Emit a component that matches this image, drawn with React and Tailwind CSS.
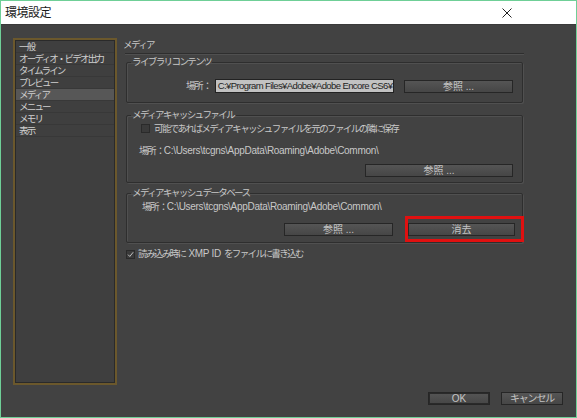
const FONT = "font-['Liberation_Sans','Noto_Sans_CJK_JP',sans-serif]";
const JP = "text-[9.5px] leading-[14px] tracking-[-1.6px]";
const LAT = "text-[10px] leading-[14px] tracking-[-0.3px]";

const NAV = ["一般", "オーディオ・ビデオ出力", "タイムライン", "プレビュー", "メディア", "メニュー", "メモリ", "表示"];

function Btn({ children, className = "" }) {
  return (
    <button
      className={`relative h-[13px] whitespace-nowrap border border-[#262626] bg-gradient-to-b from-[#555] to-[#464646] text-[10px] leading-[11px] text-[#c4c4c4] ${className}`}
    >
      {children}
    </button>
  );
}

function Group({ title, className = "", children }) {
  return (
    <fieldset
      className={`ml-[4px] mr-[1px] rounded-[2px] border border-[#2e2e2e] shadow-[inset_1px_1px_0_#505050,1px_1px_0_#505050] ${className}`}
    >
      <legend className={`ml-[4px] px-[1px] text-[#c8c8c8] ${JP}`}>{title}</legend>
      {children}
    </fieldset>
  );
}

function Check({ checked }) {
  return (
    <span className="flex h-[9px] w-[9px] shrink-0 items-center justify-center border border-[#2a2a2a] bg-[#3a3a3a]">
      {checked && (
        <svg viewBox="0 0 10 10" className="h-[9px] w-[9px]">
          <path d="M1.5 5.2 L4 7.8 L8.8 1.8" fill="none" stroke="#cfcfcf" strokeWidth="1.3" />
        </svg>
      )}
    </span>
  );
}

function PathText({ className = "" }) {
  return (
    <div className={`flex h-[14px] items-center whitespace-nowrap text-[#c8c8c8] ${className}`}>
      <span className={JP}>場所 ：</span>
      <span className={LAT}>C:\Users\tcgns\AppData\Roaming\Adobe\Common\</span>
    </div>
  );
}

export default function App() {
  return (
    <div className={`flex h-[418px] w-[577px] flex-col border border-[#6fcf97] bg-[#424242] ${FONT}`}>
      {/* Title bar */}
      <div className="flex h-[24px] items-center justify-between border-b border-[#3a3a3a] bg-white pl-[4px] pr-[64px]">
        <span className="text-[12px] tracking-[-0.5px] text-[#1a1a1a]">環境設定</span>
        <svg viewBox="0 0 10 10" className="h-[10px] w-[10px]">
          <path d="M0.5 0.5 L9.5 9.5 M9.5 0.5 L0.5 9.5" stroke="#222" strokeWidth="1" />
        </svg>
      </div>

      <div className="flex flex-1 flex-col px-[12px] pt-[13px]">
        <div className="flex h-[347px]">
          {/* Sidebar */}
          <div className="h-full w-[104px] border-2 border-[#6b582c] bg-[#3f3f3f] px-[1px] pt-[1px] shadow-[inset_0_0_0_1px_#2a2a2a]">
            {NAV.map((n) => (
              <div
                key={n}
                className={`h-[12px] whitespace-nowrap border-b border-[#383838] pl-[3px] text-[9.5px] leading-[12px] tracking-[-1.8px] text-[#cfcfcf] ${
                  n === "メディア" ? "bg-[#575757]" : ""
                }`}
              >
                {n}
              </div>
            ))}
          </div>

          {/* Right panel */}
          <div className="ml-[5px] flex w-[402px] flex-col">
            <div className={`pl-[1px] text-[#c8c8c8] ${JP}`}>メディア</div>
            <div className="ml-[3px] mt-[1px] h-px bg-[#2e2e2e] shadow-[0_1px_0_#505050]" />

            <Group title="ライブラリコンテンツ" className="mt-[1px] pb-[9px] pt-[10px]">
              <div className="flex items-center pr-[9px]">
                <span className={`ml-[59px] whitespace-nowrap text-[#c8c8c8] ${JP}`}>場所 ：</span>
                <div className="ml-[4px] h-[14px] w-[179px] overflow-hidden whitespace-nowrap border border-[#222] bg-[#c2c2c2] pl-[2px] text-[9.5px] leading-[12px] tracking-[-0.6px] text-[#1e1e1e]">
                  C:¥Program Files¥Adobe¥Adobe Encore CS6¥
                </div>
                <Btn className="ml-auto w-[109px]">参照 ...</Btn>
              </div>
            </Group>

            <Group title="メディアキャッシュファイル" className="mt-[5px] pb-[5px]">
              <div className="flex h-[13px] items-center pl-[14px]">
                <Check />
                <span className={`ml-[4px] whitespace-nowrap text-[#c8c8c8] ${JP}`}>
                  可能であればメディアキャッシュファイルを元のファイルの隣に保存
                </span>
              </div>
              <PathText className="mt-[9px] pl-[12px]" />
              <div className="mt-[6px] flex justify-end pr-[9px]">
                <Btn className="w-[148px]">参照 ...</Btn>
              </div>
            </Group>

            <Group title="メディアキャッシュデータベース" className="mt-[3px] pb-[6px]">
              <PathText className="pl-[15px]" />
              <div className="mt-[9px] flex justify-end gap-[15px] pr-[7px]">
                <Btn className="w-[109px]">参照 ...</Btn>
                <Btn className="w-[107px]">
                  消去
                  <span className="pointer-events-none absolute bottom-[-7px] left-[-4px] right-[-10px] top-[-8px] border-[3px] border-[#e01010]" />
                </Btn>
              </div>
            </Group>

            <div className="mt-[4px] flex h-[14px] items-center whitespace-nowrap pl-[4px] text-[#c8c8c8]">
              <Check checked />
              <span className={`ml-[3px] ${JP}`}>読み込み時に</span>
              <span className={`ml-[3px] ${LAT}`}>XMP ID</span>
              <span className={`ml-[3px] ${JP}`}>をファイルに書き込む</span>
            </div>
          </div>
        </div>

        <div className="mt-[7px] flex justify-end gap-[11px] pr-[1px]">
          <Btn className="w-[62px] border-[#141414] shadow-[inset_0_0_0_1px_#2a2a2a]">OK</Btn>
          <Btn className="w-[62px] tracking-[-1.2px]">キャンセル</Btn>
        </div>
      </div>
    </div>
  );
}
